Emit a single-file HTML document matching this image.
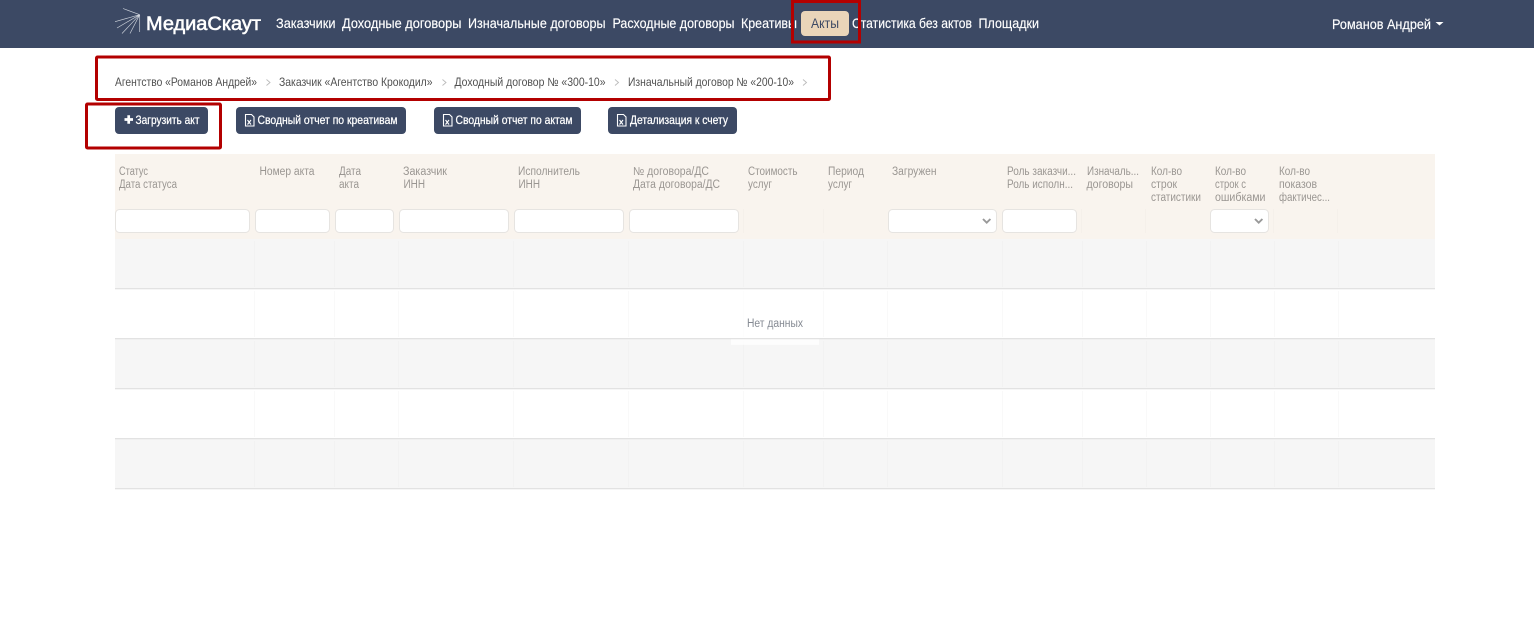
<!DOCTYPE html>
<html lang="ru">
<head>
<meta charset="utf-8">
<title>МедиаСкаут</title>
<style>
html,body{margin:0;padding:0;background:#fff;width:1534px;height:621px;overflow:hidden}
svg{display:block}
text{font-family:"Liberation Sans",sans-serif}
.n{font-size:14px;fill:#fff;stroke:#fff;stroke-width:.15px}
.b{font-size:11.8px;fill:#505050}
.t{font-size:11.8px;fill:#fff;stroke:#fff;stroke-width:.25px}
.h{font-size:11.5px;fill:#9a9692}
.in{fill:#fff;stroke:#e6e4e1;stroke-width:1}
.sh{fill:#f5f0ea}
.red{fill:none;stroke:#b30000;stroke-width:3}
.ic{fill:none;stroke:#fff;stroke-width:1.1}
</style>
</head>
<body>
<svg width="1534" height="621" viewBox="0 0 1534 621" xmlns="http://www.w3.org/2000/svg">
<rect x="0" y="0" width="1534" height="48" fill="#3c4964"/>
<g stroke="#cfd4dc" stroke-width=".65" fill="none">
<path d="M139.700 14.700L123 8.500M139.700 14.700L115 21.700M139.700 14.700L117 28M139.700 14.700L122 33.500M139.700 14.700L130 33.500M139.700 14.700V32"/>
</g>
<text x="146" y="30" font-size="19" fill="#fff" stroke="#fff" stroke-width=".55" textLength="115" lengthAdjust="spacingAndGlyphs">МедиаСкаут</text>
<text class="n" x="276" y="28" textLength="59.500" lengthAdjust="spacingAndGlyphs">Заказчики</text>
<text class="n" x="342" y="28" textLength="119.500" lengthAdjust="spacingAndGlyphs">Доходные договоры</text>
<text class="n" x="468" y="28" textLength="137.500" lengthAdjust="spacingAndGlyphs">Изначальные договоры</text>
<text class="n" x="612.500" y="28" textLength="122" lengthAdjust="spacingAndGlyphs">Расходные договоры</text>
<text class="n" x="741" y="28" textLength="56" lengthAdjust="spacingAndGlyphs">Креативы</text>
<rect x="801" y="11" width="48" height="25" rx="4" fill="#ead5b9"/>
<text x="811" y="28" font-size="14" fill="#3c4964" textLength="28" lengthAdjust="spacingAndGlyphs">Акты</text>
<text class="n" x="852" y="28" textLength="120" lengthAdjust="spacingAndGlyphs">Статистика без актов</text>
<text class="n" x="978.500" y="28" textLength="60.500" lengthAdjust="spacingAndGlyphs">Площадки</text>
<text class="n" x="1332" y="29" textLength="99" lengthAdjust="spacingAndGlyphs">Романов Андрей</text>
<path d="M1435.500 22h8l-4 3.500z" fill="#fff"/>

<text class="b" x="115" y="86" textLength="142" lengthAdjust="spacingAndGlyphs">Агентство «Романов Андрей»</text>
<path d="M266.500 79.500l3.500 3-3.500 3M442.500 79.500l3.500 3-3.500 3M615 79.500l3.500 3-3.500 3M803 79.500l3.500 3-3.500 3" fill="none" stroke="#bbb" stroke-width=".9"/>
<text class="b" x="279" y="86" textLength="153.500" lengthAdjust="spacingAndGlyphs">Заказчик «Агентство Крокодил»</text>
<text class="b" x="454.500" y="86" textLength="151" lengthAdjust="spacingAndGlyphs">Доходный договор № «300-10»</text>
<text class="b" x="628" y="86" textLength="166" lengthAdjust="spacingAndGlyphs">Изначальный договор № «200-10»</text>

<rect x="115" y="107" width="93" height="27" rx="4" fill="#3c4964"/>
<path d="M124.500 119.500h8.500M128.700 115.200v8.600" stroke="#fff" stroke-width="2.700" fill="none"/>
<text class="t" x="135.500" y="124" textLength="64" lengthAdjust="spacingAndGlyphs">Загрузить акт</text>

<rect x="236" y="107" width="170" height="27" rx="4" fill="#3c4964"/>
<path class="ic" d="M245.500 114.500h6l2.500 2.500v9h-8.500zM247.500 120l3.500 4.500M251 120l-3.500 4.500"/>
<text class="t" x="257.500" y="124" textLength="140" lengthAdjust="spacingAndGlyphs">Сводный отчет по креативам</text>

<rect x="434" y="107" width="147" height="27" rx="4" fill="#3c4964"/>
<path class="ic" d="M443.500 114.500h6l2.500 2.500v9h-8.500zM445.500 120l3.500 4.500M449 120l-3.500 4.500"/>
<text class="t" x="455.500" y="124" textLength="117" lengthAdjust="spacingAndGlyphs">Сводный отчет по актам</text>

<rect x="608" y="107" width="129" height="27" rx="4" fill="#3c4964"/>
<path class="ic" d="M617.500 114.500h6l2.500 2.500v9h-8.500zM619.500 120l3.500 4.500M623 120l-3.500 4.500"/>
<text class="t" x="630" y="124" textLength="98" lengthAdjust="spacingAndGlyphs">Детализация к счету</text>

<rect x="115" y="154" width="1320" height="85" fill="#f9f4ee"/>
<g fill="#f6f6f6">
<rect x="115" y="239" width="1320" height="50"/>
<rect x="115" y="339" width="1320" height="50"/>
<rect x="115" y="439" width="1320" height="50"/>
</g>
<g fill="#e2e2e2">
<rect x="115" y="288" width="1320" height="1.300"/>
<rect x="115" y="338" width="1320" height="1.300"/>
<rect x="115" y="388" width="1320" height="1.300"/>
<rect x="115" y="438" width="1320" height="1.300"/>
<rect x="115" y="488" width="1320" height="1.300"/>
</g>
<g fill="none" stroke="#f2f2f2" stroke-width="1">
<path d="M254.500 241v46M334.500 241v46M398.500 241v46M513.500 241v46M628.500 241v46M743.500 241v46M823.500 241v46M887.500 241v46M1002.500 241v46M1082.500 241v46M1146.500 241v46M1210.500 241v46M1274.500 241v46M1338.500 241v46"/>
<path d="M254.500 341v46M334.500 341v46M398.500 341v46M513.500 341v46M628.500 341v46M743.500 341v46M823.500 341v46M887.500 341v46M1002.500 341v46M1082.500 341v46M1146.500 341v46M1210.500 341v46M1274.500 341v46M1338.500 341v46"/>
<path d="M254.500 441v46M334.500 441v46M398.500 441v46M513.500 441v46M628.500 441v46M743.500 441v46M823.500 441v46M887.500 441v46M1002.500 441v46M1082.500 441v46M1146.500 441v46M1210.500 441v46M1274.500 441v46M1338.500 441v46"/>
</g>
<g fill="none" stroke="#f9f9f9" stroke-width="1">
<path d="M254.500 291v46M334.500 291v46M398.500 291v46M513.500 291v46M628.500 291v46M743.500 291v46M823.500 291v46M887.500 291v46M1002.500 291v46M1082.500 291v46M1146.500 291v46M1210.500 291v46M1274.500 291v46M1338.500 291v46"/>
<path d="M254.500 391v46M334.500 391v46M398.500 391v46M513.500 391v46M628.500 391v46M743.500 391v46M823.500 391v46M887.500 391v46M1002.500 391v46M1082.500 391v46M1146.500 391v46M1210.500 391v46M1274.500 391v46M1338.500 391v46"/>
</g>
<g class="sh">
<rect x="743" y="209" width="1" height="24"/><rect x="823" y="209" width="1" height="24"/><rect x="1081" y="209" width="1" height="24"/><rect x="1145" y="209" width="1" height="24"/><rect x="1273" y="209" width="1" height="24"/><rect x="1337" y="209" width="1" height="24"/>
</g>

<text class="h" x="119" y="175" textLength="29" lengthAdjust="spacingAndGlyphs">Статус</text>
<text class="h" x="119" y="188" textLength="58" lengthAdjust="spacingAndGlyphs">Дата статуса</text>
<text class="h" x="259.500" y="175" textLength="55" lengthAdjust="spacingAndGlyphs">Номер акта</text>
<text class="h" x="339" y="175" textLength="22" lengthAdjust="spacingAndGlyphs">Дата</text>
<text class="h" x="339" y="188" textLength="20" lengthAdjust="spacingAndGlyphs">акта</text>
<text class="h" x="403" y="175" textLength="44" lengthAdjust="spacingAndGlyphs">Заказчик</text>
<text class="h" x="403.500" y="188" textLength="21.500" lengthAdjust="spacingAndGlyphs">ИНН</text>
<text class="h" x="518" y="175" textLength="62" lengthAdjust="spacingAndGlyphs">Исполнитель</text>
<text class="h" x="518.500" y="188" textLength="21.500" lengthAdjust="spacingAndGlyphs">ИНН</text>
<text class="h" x="633" y="175" textLength="76" lengthAdjust="spacingAndGlyphs">№ договора/ДС</text>
<text class="h" x="633" y="188" textLength="87" lengthAdjust="spacingAndGlyphs">Дата договора/ДС</text>
<text class="h" x="748" y="175" textLength="49.500" lengthAdjust="spacingAndGlyphs">Стоимость</text>
<text class="h" x="748" y="188" textLength="24" lengthAdjust="spacingAndGlyphs">услуг</text>
<text class="h" x="828" y="175" textLength="36" lengthAdjust="spacingAndGlyphs">Период</text>
<text class="h" x="828" y="188" textLength="24" lengthAdjust="spacingAndGlyphs">услуг</text>
<text class="h" x="892" y="175" textLength="44.500" lengthAdjust="spacingAndGlyphs">Загружен</text>
<text class="h" x="1007" y="175" textLength="69" lengthAdjust="spacingAndGlyphs">Роль заказчи...</text>
<text class="h" x="1007" y="188" textLength="66" lengthAdjust="spacingAndGlyphs">Роль исполн...</text>
<text class="h" x="1087" y="175" textLength="52" lengthAdjust="spacingAndGlyphs">Изначаль...</text>
<text class="h" x="1086.500" y="188" textLength="46.500" lengthAdjust="spacingAndGlyphs">договоры</text>
<text class="h" x="1151" y="175" textLength="31" lengthAdjust="spacingAndGlyphs">Кол-во</text>
<text class="h" x="1151" y="188" textLength="26" lengthAdjust="spacingAndGlyphs">строк</text>
<text class="h" x="1151" y="201" textLength="50" lengthAdjust="spacingAndGlyphs">статистики</text>
<text class="h" x="1215" y="175" textLength="31" lengthAdjust="spacingAndGlyphs">Кол-во</text>
<text class="h" x="1215" y="188" textLength="31" lengthAdjust="spacingAndGlyphs">строк с</text>
<text class="h" x="1215" y="201" textLength="50.500" lengthAdjust="spacingAndGlyphs">ошибками</text>
<text class="h" x="1279" y="175" textLength="31" lengthAdjust="spacingAndGlyphs">Кол-во</text>
<text class="h" x="1279" y="188" textLength="38" lengthAdjust="spacingAndGlyphs">показов</text>
<text class="h" x="1279" y="201" textLength="51" lengthAdjust="spacingAndGlyphs">фактичес...</text>

<rect class="in" x="115.500" y="209.500" width="134" height="23" rx="4"/>
<rect class="in" x="255.500" y="209.500" width="74" height="23" rx="4"/>
<rect class="in" x="335.500" y="209.500" width="58" height="23" rx="4"/>
<rect class="in" x="399.500" y="209.500" width="109" height="23" rx="4"/>
<rect class="in" x="514.500" y="209.500" width="109" height="23" rx="4"/>
<rect class="in" x="629.500" y="209.500" width="109" height="23" rx="4"/>
<rect class="in" x="888.500" y="209.500" width="108" height="23" rx="4"/>
<rect class="in" x="1002.500" y="209.500" width="74" height="23" rx="4"/>
<rect class="in" x="1210.500" y="209.500" width="58" height="23" rx="4"/>
<path d="M983 219l3.700 3.700 3.700-3.700M1255 219l3.700 3.700 3.700-3.700" fill="none" stroke="#999" stroke-width="1.900"/>

<rect x="731" y="339.300" width="88" height="5.500" fill="#fff" opacity=".75"/>
<rect x="743" y="291" width="1" height="46" fill="#fdfdfd"/>
<text x="747" y="327" font-size="11.500" fill="#858a93" textLength="56" lengthAdjust="spacingAndGlyphs">Нет данных</text>

<rect class="red" x="792.500" y="1.500" width="67" height="40.500"/>
<rect class="red" x="96.500" y="57" width="733" height="42.500" rx="1"/>
<rect class="red" x="86.500" y="104" width="134" height="44" rx="1"/>
</svg>
</body>
</html>
